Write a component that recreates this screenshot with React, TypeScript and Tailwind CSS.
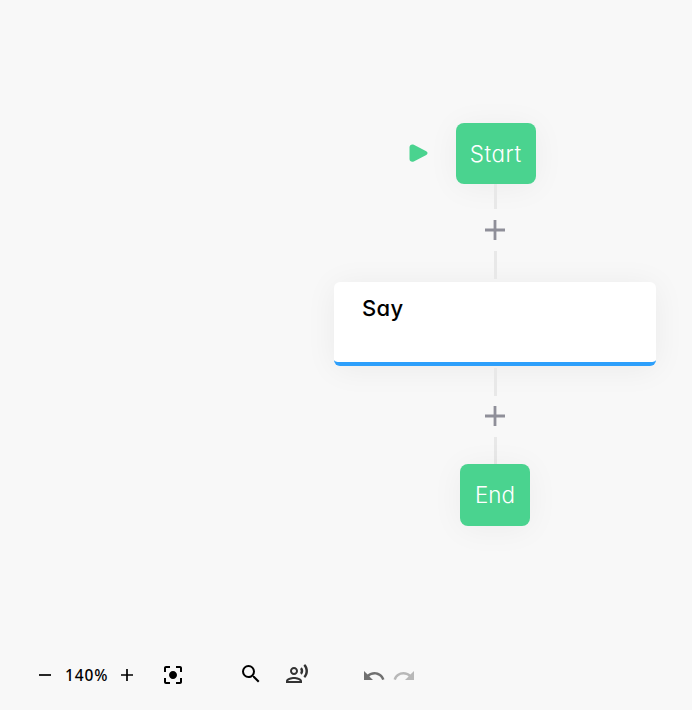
import type { ReactNode } from "react";
import {
  MdCenterFocusStrong,
  MdOutlineRecordVoiceOver,
  MdRedo,
  MdSearch,
  MdUndo,
} from "react-icons/md";

function Terminal({ className, children }: { className: string; children: ReactNode }) {
  return (
    <div
      className={`relative flex shrink-0 items-center justify-center rounded-[8px] bg-[#4ad38f] text-[22.4px] font-light text-white shadow-[0_3px_32px_rgba(0,0,0,0.05)] ${className}`}
    >
      {children}
    </div>
  );
}

function Line({ className }: { className: string }) {
  return <div className={`relative w-[3px] shrink-0 bg-[#e8e8e8] ${className}`} />;
}

function AddButton() {
  return (
    <button className="relative flex size-5 items-center justify-center text-[#8f8f99]" aria-label="Add step">
      <svg width="20" height="20" viewBox="0 0 20 20" fill="none" stroke="currentColor" strokeWidth="2.8">
        <path d="M10 0v20M0 10h20" />
      </svg>
    </button>
  );
}

export default function App() {
  return (
    <div className="flex h-[710px] w-[692px] flex-col overflow-hidden bg-[#f8f8f8] font-['Inter','Noto_Sans',sans-serif] [font-feature-settings:'cv11']">
      <main className="flex h-[640px] flex-col items-center pl-[298px] pt-[122.5px]">
        <Terminal className="ml-px h-[61.5px] w-[80px]">
          <svg className="absolute -left-[47px] top-[21px]" width="19" height="19" viewBox="0 0 19 19" fill="#4ad38f">
            <path d="M.5 3.3C.5 1 2.7-.2 4.8.8l12 6.1c2.3 1.2 2.3 3.2 0 4.3l-12 6.2C2.7 18.400.5 17.200.5 15Z" />
          </svg>
          <span className="mr-[-0.6px] pt-[2px] tracking-[0.6px]">Start</span>
        </Terminal>
        <Line className="h-[25px]" />
        <div className="pt-[11px] pb-[11px]">
          <AddButton />
        </div>
        <Line className="h-[28px]" />
        <section className="mt-[3px] h-[84px] w-[322px] shrink-0 overflow-hidden rounded-[6px] border-b-4 border-[#2d9ffb] bg-white pl-7 pt-[10px] text-[22px] font-medium leading-8 tracking-[0.4px] text-black shadow-[0_3px_32px_rgba(0,0,0,0.06)]">
          Say
        </section>
        <Line className="mt-[2px] h-[28px]" />
        <div className="pt-[10px] pb-[11px]">
          <AddButton />
        </div>
        <Line className="h-[27px]" />
        <Terminal className="h-[62px] w-[70px]">
          <span>End</span>
        </Terminal>
      </main>
      <footer className="flex h-[70px] items-start pl-[39px] pt-[22px] text-black">
        <div className="flex h-[26px] items-center">
          <svg width="12" height="12" viewBox="0 0 12 12" stroke="currentColor" strokeWidth="1.7">
            <path d="M0 6h12" />
          </svg>
          <span className="ml-[14px] w-[43px] whitespace-nowrap pt-[2px] font-['Noto_Sans',sans-serif] text-[15.5px] font-medium tracking-[0.9px]">140%</span>
          <svg className="ml-[13px]" width="12" height="12" viewBox="0 0 12 12" stroke="currentColor" strokeWidth="1.7">
            <path d="M0 6h12M6 0v12" />
          </svg>
        </div>
        <MdCenterFocusStrong className="ml-7 mt-px size-6" />
        <MdSearch className="ml-[54px] size-6" />
        <MdOutlineRecordVoiceOver className="ml-[22px] size-6 text-[#333]" />
        <MdUndo className="ml-[53px] mt-[2px] size-6 text-[#707070]" />
        <MdRedo className="ml-[6px] mt-[2px] size-6 text-[#b8b8b8]" />
      </footer>
    </div>
  );
}
